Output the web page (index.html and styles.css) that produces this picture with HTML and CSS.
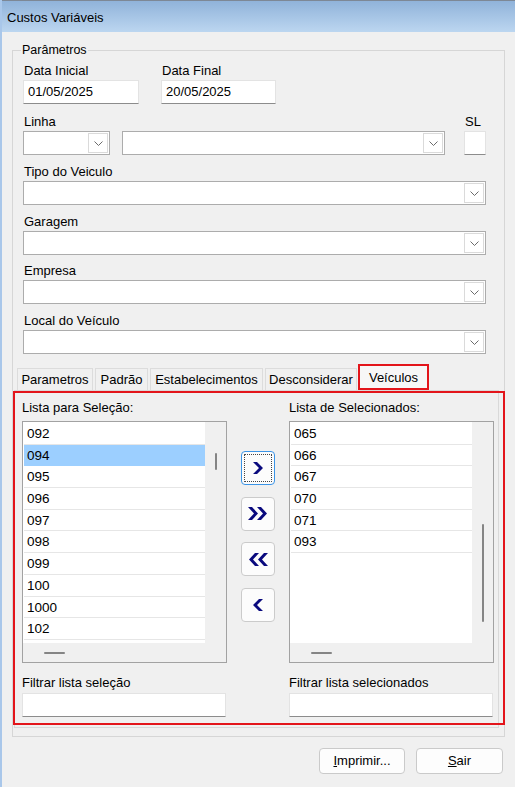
FILE: index.html
```html
<!DOCTYPE html>
<html lang="pt-BR">
<head>
<meta charset="utf-8">
<title>Custos Variáveis</title>
<link rel="stylesheet" href="styles.css">
</head>
<body>
<div class="window">
  <div class="titlebar">Custos Variáveis</div>
  <fieldset class="group">
    <legend>Parâmetros</legend>

    <div class="row dates">
      <div class="field"><label>Data Inicial</label><div class="textbox">01/05/2025</div></div>
      <div class="field"><label>Data Final</label><div class="textbox">20/05/2025</div></div>
    </div>

    <div class="row linha">
      <div class="field"><label>Linha</label>
        <div class="combo"><span class="combo-btn"><svg width="9" height="5" viewBox="0 0 9 5"><polyline points="0.5,0.5 4.5,4.5 8.5,0.5" fill="none" stroke="#6b6b6b" stroke-width="1"/></svg></span></div>
      </div>
      <div class="field"><label>&nbsp;</label>
        <div class="combo"><span class="combo-btn"><svg width="9" height="5" viewBox="0 0 9 5"><polyline points="0.5,0.5 4.5,4.5 8.5,0.5" fill="none" stroke="#6b6b6b" stroke-width="1"/></svg></span></div>
      </div>
      <div class="field sl"><label>SL</label><div class="textbox"></div></div>
    </div>

    <div class="row">
      <div class="field"><label>Tipo do Veiculo</label>
        <div class="combo"><span class="combo-btn"><svg width="9" height="5" viewBox="0 0 9 5"><polyline points="0.5,0.5 4.5,4.5 8.5,0.5" fill="none" stroke="#6b6b6b" stroke-width="1"/></svg></span></div>
      </div>
    </div>

    <div class="row tight">
      <div class="field"><label>Garagem</label>
        <div class="combo"><span class="combo-btn"><svg width="9" height="5" viewBox="0 0 9 5"><polyline points="0.5,0.5 4.5,4.5 8.5,0.5" fill="none" stroke="#6b6b6b" stroke-width="1"/></svg></span></div>
      </div>
    </div>

    <div class="row">
      <div class="field"><label>Empresa</label>
        <div class="combo"><span class="combo-btn"><svg width="9" height="5" viewBox="0 0 9 5"><polyline points="0.5,0.5 4.5,4.5 8.5,0.5" fill="none" stroke="#6b6b6b" stroke-width="1"/></svg></span></div>
      </div>
    </div>

    <div class="row last">
      <div class="field"><label>Local do Veículo</label>
        <div class="combo"><span class="combo-btn"><svg width="9" height="5" viewBox="0 0 9 5"><polyline points="0.5,0.5 4.5,4.5 8.5,0.5" fill="none" stroke="#6b6b6b" stroke-width="1"/></svg></span></div>
      </div>
    </div>

    <div class="tabs">
      <div class="tabstrip">
        <div class="tab t1">Parametros</div>
        <div class="tab t2">Padrão</div>
        <div class="tab t3">Estabelecimentos</div>
        <div class="tab t4">Desconsiderar</div>
        <div class="tab active">Veículos</div>
      </div>
      <div class="tabpage">
        <div class="redbox">
          <div class="cap c1">Lista para Seleção:</div>
          <div class="cap c3">Lista de Selecionados:</div>

          <div class="listbox c1">
            <div class="rows">
              <div class="item">092</div>
              <div class="item sel">094</div>
              <div class="item">095</div>
              <div class="item">096</div>
              <div class="item">097</div>
              <div class="item">098</div>
              <div class="item">099</div>
              <div class="item">100</div>
              <div class="item">1000</div>
              <div class="item">102</div>
              <div class="item stub"></div>
            </div>
            <div class="vscroll"><span class="vthumb small"></span></div>
            <div class="hscroll"><span class="hthumb"></span></div>
            <div class="corner"></div>
          </div>

          <div class="movers">
            <div class="mv focus"><svg width="10" height="12" viewBox="0 0 10 12"><polygon points="0,0 4,0 10,6 4,12 0,12 6,6" fill="#0a0a7e"/></svg></div>
            <div class="mv"><svg width="20" height="13" viewBox="0 0 20 13"><polygon points="0,0 4,0 10,6.5 4,13 0,13 6,6.5" fill="#0a0a7e"/><polygon points="9,0 13,0 19,6.5 13,13 9,13 15,6.5" fill="#0a0a7e"/></svg></div>
            <div class="mv"><svg width="20" height="13" viewBox="0 0 20 13"><polygon points="20,0 16,0 10,6.5 16,13 20,13 14,6.5" fill="#0a0a7e"/><polygon points="11,0 7,0 1,6.5 7,13 11,13 5,6.5" fill="#0a0a7e"/></svg></div>
            <div class="mv"><svg width="10" height="12" viewBox="0 0 10 12"><polygon points="10,0 6,0 0,6 6,12 10,12 4,6" fill="#0a0a7e"/></svg></div>
          </div>

          <div class="listbox c3">
            <div class="rows">
              <div class="item">065</div>
              <div class="item">066</div>
              <div class="item">067</div>
              <div class="item">070</div>
              <div class="item">071</div>
              <div class="item">093</div>
            </div>
            <div class="vscroll"><span class="vthumb big"></span></div>
            <div class="hscroll"><span class="hthumb"></span></div>
            <div class="corner"></div>
          </div>

          <div class="cap c1 fcap">Filtrar lista seleção</div>
          <div class="cap c3 fcap">Filtrar lista selecionados</div>
          <div class="textbox filter c1"></div>
          <div class="textbox filter c3"></div>
        </div>
      </div>
    </div>
  </fieldset>

  <div class="actions">
    <div class="btn b1"><u>I</u>mprimir...</div>
    <div class="btn b2"><u>S</u>air</div>
  </div>
</div>
</body>
</html>
```

FILE: styles.css
```css
html, body {
  margin: 0;
  padding: 0;
  background: #f0f0f0;
}

body {
  font-family: "Liberation Sans", Arial, sans-serif;
  font-size: 13px;
  color: #000;
}

.window {
  width: 515px;
  height: 787px;
  box-sizing: border-box;
  border-left: 2px solid #a9c7ea;
  background: #f0f0f0;
  overflow: hidden;
}

.titlebar {
  height: 32px;
  box-sizing: border-box;
  border-top: 1px solid #7d8896;
  background: linear-gradient(#90b3da, #bcd6f0);
  padding-left: 5px;
  line-height: 34px;
  font-size: 13px;
}

.group {
  margin: 11px 10px 0 10px;
  padding: 5px 18px 8px 10px;
  border: 1px solid #d6d6d6;
  min-width: 0;
}

.group legend {
  padding: 0 1px;
  margin-left: -2px;
  line-height: 15px;
  font-size: 12.5px;
}

.row {
  display: grid;
  grid-template-columns: 1fr;
  margin-bottom: 9px;
}

.row.tight {
  margin-bottom: 8px;
}

.row.last {
  margin-bottom: 0;
}

.dates {
  grid-template-columns: 116px 115px;
  column-gap: 22px;
  margin-bottom: 10px;
}

.linha {
  grid-template-columns: 87px 323px 29px;
  column-gap: 12px;
}

.sl {
  padding-left: 7px;
}

.field label {
  display: block;
  line-height: 15px;
  height: 15px;
  margin-bottom: 2px;
  padding-left: 1px;
}

.textbox {
  height: 24px;
  box-sizing: border-box;
  background: #fff;
  border: 1px solid #e3e3e3;
  border-bottom-color: #8c8c8c;
  padding-left: 4px;
  line-height: 22px;
}

.combo {
  height: 24px;
  box-sizing: border-box;
  background: #fff;
  border: 1px solid #acacac;
  padding: 1px;
  display: flex;
  justify-content: flex-end;
}

.combo-btn {
  width: 20px;
  height: 20px;
  box-sizing: border-box;
  border: 1px solid #dadada;
  display: flex;
  align-items: center;
  justify-content: center;
  padding-top: 1px;
}

/* tabs */
.tabs {
  margin: 10px -13px 0 -9px;
}

.tabstrip {
  display: flex;
  align-items: flex-end;
  height: 26px;
  padding-left: 3px;
}

.tab {
  height: 22px;
  box-sizing: border-box;
  border: 1px solid #dcdcdc;
  border-bottom: none;
  background: #f0f0f0;
  line-height: 21px;
  text-align: center;
  margin-right: 2px;
}

.t1 { width: 76px; }
.t2 { width: 53px; }
.t3 { width: 113px; }
.t4 { width: 92px; margin-right: 1px; }

.tab.active {
  width: 71px;
  height: 26px;
  border: 2px solid #e3151b;
  background: #f7f7f7;
  line-height: 23px;
  margin-right: 0;
}

.tabpage {
  border: 1px solid #d9d9d9;
  padding: 0 0 2px 0;
}

.redbox {
  border: 2px solid #e3151b;
  margin: 0 -7px 0 -2px;
  padding: 7px 9px 6px 7px;
  display: grid;
  grid-template-columns: 205px 62px 205px;
  grid-template-rows: auto auto auto auto;
}

.cap {
  line-height: 15px;
  white-space: nowrap;
}

.c1 { grid-column: 1; }
.c3 { grid-column: 3; }

.listbox {
  grid-row: 2;
  margin-top: 6px;
  height: 242px;
  box-sizing: border-box;
  border: 1px solid #a2a2a2;
  background: #f0f0f0;
  display: grid;
  grid-template-columns: 1fr 21px;
  grid-template-rows: 1fr 19px;
  overflow: hidden;
}

.redbox .fcap {
  grid-row: 3;
  margin-top: 12px;
}

.redbox .filter {
  grid-row: 4;
  margin-top: 3px;
  width: 204px;
}

.rows {
  background: #fff;
  padding: 1px 0 0 1px;
  overflow: hidden;
  min-height: 0;
}

.item {
  height: 21.7px;
  box-sizing: border-box;
  border-bottom: 1px solid #e6e6e6;
  padding-left: 3px;
  line-height: 21px;
  font-size: 13.5px;
}

.item.sel {
  background: #9ccfff;
  border-bottom-color: #9ccfff;
}

.vscroll {
  display: flex;
  flex-direction: column;
  align-items: center;
}

.vthumb {
  width: 2px;
  background: #858585;
  border-radius: 1px;
}

.vthumb.small {
  margin-top: 31px;
  height: 17px;
}

.vthumb.big {
  margin-top: 102px;
  height: 98px;
}

.hscroll {
  display: flex;
  align-items: center;
  padding-left: 21px;
}

.hthumb {
  width: 21px;
  height: 2px;
  background: #858585;
  border-radius: 1px;
}

.movers {
  grid-row: 2;
  grid-column: 2;
  display: flex;
  flex-direction: column;
  align-items: center;
  padding-top: 36px;
  gap: 11.5px;
}

.mv {
  width: 34px;
  height: 34px;
  box-sizing: border-box;
  border: 1px solid #cbcbcb;
  border-radius: 4px;
  background: #fcfcfc;
  display: flex;
  align-items: center;
  justify-content: center;
}

.mv.focus {
  border-color: #3b94e6;
  outline: 1px dotted #444;
  outline-offset: -4px;
}

.actions {
  display: flex;
  justify-content: flex-end;
  gap: 11px;
  margin-top: 11px;
  padding-right: 12px;
}

.btn {
  height: 26px;
  box-sizing: border-box;
  border: 1px solid #cacaca;
  border-radius: 4px;
  background: #fdfdfd;
  text-align: center;
  line-height: 24px;
}

.b1 { width: 86px; }
.b2 { width: 87px; }
```
